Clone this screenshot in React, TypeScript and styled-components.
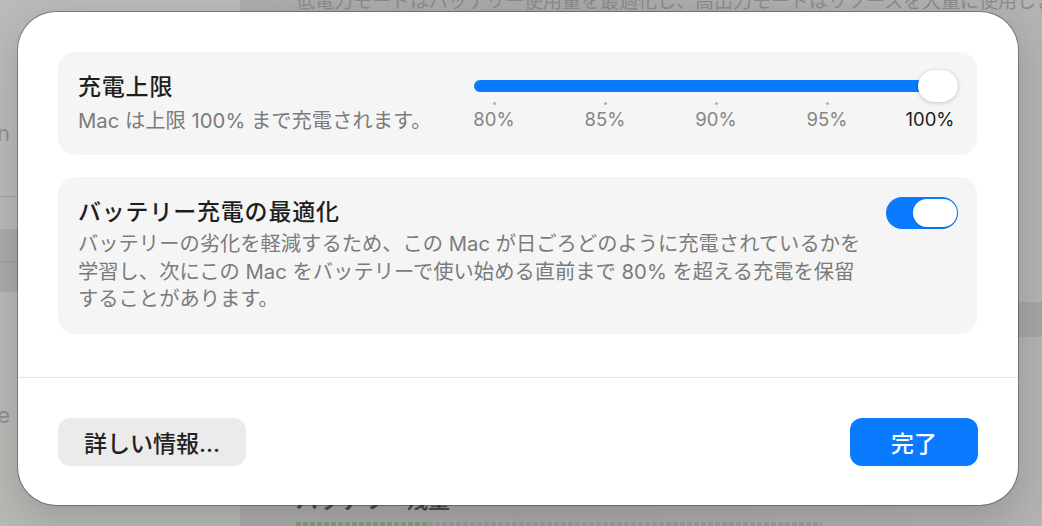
import { FC } from 'react'
import styled, { createGlobalStyle } from 'styled-components'

const GlobalStyle = createGlobalStyle`
  html, body {
    margin: 0;
    padding: 0;
  }
  body {
    width: 1042px;
    height: 526px;
    overflow: hidden;
    font-family: Inter, "Noto Sans CJK JP", sans-serif;
    -webkit-font-smoothing: antialiased;
  }
`

const Backdrop = styled.div`
  position: relative;
  width: 1042px;
  height: 526px;
  overflow: hidden;
  display: flex;
  background: linear-gradient(90deg, #b0b0b0 0%, #a9a9a9 50%, #b3b3b3 100%);
`

const Sidebar = styled.aside`
  width: 240px;
  flex-shrink: 0;
  display: flex;
  flex-direction: column;
  padding-top: 117px;
  background: linear-gradient(180deg, #bababa 0%, #b7b9b5 100%);
`

const SidebarItem = styled.div<{ $top?: number }>`
  height: 32px;
  margin-top: ${({ $top }) => $top ?? 0}px;
  display: flex;
  align-items: center;
  justify-content: flex-end;
  padding-right: 230px;
  font-size: 22px;
  color: #8e8e8e;
  white-space: nowrap;
`

const SidebarRule = styled.div<{ $top: number }>`
  height: 1px;
  margin-top: ${({ $top }) => $top}px;
  width: 16px;
  background: #9c9c9c;
`

const SidebarSelection = styled.div`
  height: 63px;
  box-sizing: border-box;
  margin-top: 32px;
  display: flex;
  flex-direction: column;
  padding-top: 32px;
  background: #aaaaaa;
`

const Main = styled.main`
  flex: 1;
  display: flex;
  flex-direction: column;
  padding-left: 56px;
`

const TopNote = styled.p`
  margin: -12px 0 0;
  font-size: 19px;
  line-height: 28px;
  color: #8b8b8b;
  white-space: nowrap;
`

const Band = styled.div`
  height: 35px;
  margin: 286px 0 0 -56px;
  background: #a5a5a5;
`

const BottomGroup = styled.div`
  margin-top: auto;
  display: flex;
  flex-direction: column;
  gap: 8px;
`

const BottomHeading = styled.h2`
  margin: 0;
  font-size: 22px;
  line-height: 28px;
  font-weight: 700;
  color: #4c4c4c;
`

const LevelBar = styled.div`
  display: flex;
  height: 4px;
  width: 526px;
`

const LevelSegment = styled.div<{ $width: number; $color: string }>`
  width: ${({ $width }) => $width}px;
  background: repeating-linear-gradient(90deg, ${({ $color }) => $color} 0 5px, transparent 5px 7px);
`

const Sheet = styled.div`
  position: absolute;
  left: 18px;
  top: 12px;
  width: 1000px;
  height: 493px;
  display: flex;
  flex-direction: column;
  background: #ffffff;
  border-radius: 38px;
  box-shadow: 0 0 0 1px rgba(0, 0, 0, 0.3), 0 14px 40px rgba(0, 0, 0, 0.16);
  overflow: hidden;
`

const SheetBody = styled.div`
  height: 365px;
  box-sizing: border-box;
  display: flex;
  flex-direction: column;
  gap: 22px;
  padding: 40px 41px 0 40px;
`

const Card = styled.section<{ $height: number; $align: string }>`
  height: ${({ $height }) => $height}px;
  box-sizing: border-box;
  display: flex;
  justify-content: space-between;
  align-items: ${({ $align }) => $align};
  padding: ${({ $align }) => ($align === 'center' ? '0 19px 0 20px' : '20px 19px 0 20px')};
  background: #f5f5f5;
  border-radius: 17px;
`

const TextBlock = styled.div`
  display: flex;
  flex-direction: column;
`

const Title = styled.h3`
  margin: 0;
  font-size: 23px;
  line-height: 30px;
  font-weight: 500;
  letter-spacing: 0.8px;
  color: #1e1e1e;
`

const Subtitle = styled.p<{ $gap: number }>`
  margin: ${({ $gap }) => $gap}px 0 0;
  font-size: 20.3px;
  line-height: 27.5px;
  color: #7b7b7b;
  white-space: nowrap;
`

const Slider = styled.div`
  width: 484px;
  margin-bottom: 7px;
  display: flex;
  flex-direction: column;
`

const TrackArea = styled.div`
  position: relative;
  height: 32px;
  display: flex;
  align-items: center;
`

const Track = styled.div`
  width: 100%;
  height: 12px;
  border-radius: 6px;
  background: #0a7aff;
`

const SliderKnob = styled.div`
  position: absolute;
  right: 0;
  top: 0;
  width: 40px;
  height: 32px;
  border-radius: 16px;
  background: #ffffff;
  box-shadow: 0 1px 4px rgba(0, 0, 0, 0.18), 0 0 0 0.5px rgba(0, 0, 0, 0.06);
`

const TickRow = styled.div`
  display: flex;
  justify-content: space-between;
  padding: 0 20px;
`

const Tick = styled.div`
  width: 0;
  display: flex;
  flex-direction: column;
  align-items: center;
`

const TickDot = styled.span<{ $hidden?: boolean }>`
  width: 3px;
  height: 3px;
  border-radius: 50%;
  background: ${({ $hidden }) => ($hidden ? 'transparent' : '#b2b2b2')};
`

const TickLabel = styled.span<{ $active?: boolean }>`
  margin-top: 3px;
  font-size: 18.5px;
  line-height: 22px;
  white-space: nowrap;
  color: ${({ $active }) => ($active ? '#1e1e1e' : '#858585')};
  transform: ${({ $active }) => ($active ? 'translateX(-8px)' : 'none')};
`

const Toggle = styled.div`
  width: 72px;
  height: 32px;
  box-sizing: border-box;
  flex-shrink: 0;
  display: flex;
  justify-content: flex-end;
  padding: 2px 1px;
  border-radius: 16px;
  background: #0a7aff;
`

const ToggleKnob = styled.span`
  width: 44px;
  height: 28px;
  border-radius: 14px;
  background: #ffffff;
  box-shadow: 0 1px 2px rgba(0, 0, 0, 0.15);
`

const Divider = styled.div`
  height: 1px;
  background: #e3e3e3;
`

const Footer = styled.footer`
  display: flex;
  justify-content: space-between;
  padding: 40px 40px 0 40px;
`

const Button = styled.button<{ $primary?: boolean; $width: number }>`
  width: ${({ $width }) => $width}px;
  height: 48px;
  border: none;
  border-radius: 12px;
  font-family: inherit;
  font-size: 23px;
  font-weight: 500;
  background: ${({ $primary }) => ($primary ? '#0a7aff' : '#ebebeb')};
  color: ${({ $primary }) => ($primary ? '#ffffff' : '#222222')};
`

const ticks = ['80%', '85%', '90%', '95%', '100%']

const App: FC = () => {
  return (
    <>
      <GlobalStyle />
      <Backdrop>
        <Sidebar>
          <SidebarItem>Lock Screen</SidebarItem>
          <SidebarRule $top={47} />
          <SidebarSelection>
            <SidebarRule $top={0} />
          </SidebarSelection>
          <SidebarItem $top={107}>Appearance</SidebarItem>
        </Sidebar>
        <Main>
          <TopNote>
            低電力モードはバッテリー使用量を最適化し、高出力モードはリソースを大量に使用します。
          </TopNote>
          <Band />
          <BottomGroup>
            <BottomHeading>バッテリー残量</BottomHeading>
            <LevelBar>
              <LevelSegment $width={132} $color="#7fa27d" />
              <LevelSegment $width={394} $color="#9d9d9d" />
            </LevelBar>
          </BottomGroup>
        </Main>

        <Sheet>
          <SheetBody>
            <Card $height={103} $align="center">
              <TextBlock>
                <Title>充電上限</Title>
                <Subtitle $gap={5}>Mac は上限 100% まで充電されます。</Subtitle>
              </TextBlock>
              <Slider>
                <TrackArea>
                  <Track />
                  <SliderKnob />
                </TrackArea>
                <TickRow>
                  {ticks.map((t, i) => (
                    <Tick key={t}>
                      <TickDot $hidden={i === ticks.length - 1} />
                      <TickLabel $active={i === ticks.length - 1}>{t}</TickLabel>
                    </Tick>
                  ))}
                </TickRow>
              </Slider>
            </Card>

            <Card $height={157} $align="flex-start">
              <TextBlock>
                <Title>バッテリー充電の最適化</Title>
                <Subtitle $gap={3}>
                  バッテリーの劣化を軽減するため、この Mac が日ごろどのように充電されているかを
                  <br />
                  学習し、次にこの Mac をバッテリーで使い始める直前まで 80% を超える充電を保留
                  <br />
                  することがあります。
                </Subtitle>
              </TextBlock>
              <Toggle>
                <ToggleKnob />
              </Toggle>
            </Card>
          </SheetBody>
          <Divider />
          <Footer>
            <Button $width={188}>詳しい情報...</Button>
            <Button $width={128} $primary>
              完了
            </Button>
          </Footer>
        </Sheet>
      </Backdrop>
    </>
  )
}

export default App
